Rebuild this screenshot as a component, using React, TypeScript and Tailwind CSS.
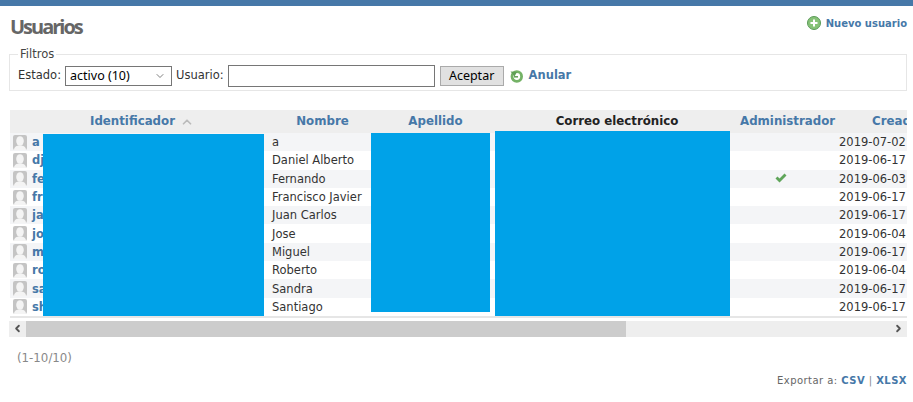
import { ChevronDown, ChevronLeft, ChevronRight, ChevronUp } from "lucide-react";

const users = [
  { id: "a", nombre: "a", creado: "2019-07-02" },
  { id: "dj", nombre: "Daniel Alberto", creado: "2019-06-17" },
  { id: "fe", nombre: "Fernando", creado: "2019-06-03", admin: true },
  { id: "fr", nombre: "Francisco Javier", creado: "2019-06-17" },
  { id: "ja", nombre: "Juan Carlos", creado: "2019-06-17" },
  { id: "jo", nombre: "Jose", creado: "2019-06-04" },
  { id: "m", nombre: "Miguel", creado: "2019-06-17" },
  { id: "ro", nombre: "Roberto", creado: "2019-06-04" },
  { id: "sa", nombre: "Sandra", creado: "2019-06-17" },
  { id: "sh", nombre: "Santiago", creado: "2019-06-17" },
];

function Avatar() {
  return (
    <svg width="14" height="15" viewBox="0 0 14 15" className="shrink-0">
      <rect width="14" height="15" rx="2" fill="#c4c4c4" />
      <ellipse cx="7" cy="6" rx="3.800" ry="4.800" fill="#f4f4f4" />
      <path d="M1 15c0-3.200 2.500-4.500 6-4.500s6 1.300 6 4.500z" fill="#f4f4f4" />
    </svg>
  );
}

function PlusIcon() {
  return (
    <svg width="14" height="14" viewBox="0 0 14 14">
      <circle cx="7" cy="7" r="6.500" fill="#86c277" stroke="#5a9a58" />
      <path d="M7 3.500v7M3.500 7h7" stroke="#fff" strokeWidth="2" />
    </svg>
  );
}

function UndoIcon() {
  return (
    <svg width="13" height="13" viewBox="0 0 13 13" fill="none">
      <circle cx="6.800" cy="6.500" r="4.800" stroke="#74b266" strokeWidth="2.800" />
      <path d="M0.500 1.500l6.500 .5-2.500 4.500z" fill="#5f9f55" />
      <path d="M4 6.800h4" stroke="#5f9f55" strokeWidth="1.500" />
    </svg>
  );
}

function CheckIcon() {
  return (
    <svg width="12" height="10" viewBox="0 0 12 10">
      <path d="M0.500 5.500L2.500 3.500 4.500 5.500 9.500 0.500 11.500 2.500 4.500 9.500z" fill="#5fa55a" />
    </svg>
  );
}

export default function App() {
  return (
    <div className="relative h-[402px] w-[913px] overflow-hidden bg-white font-['DejaVu_Sans',Verdana,sans-serif] text-[11.5px] text-[#333]">
      <div className="h-[6px] bg-[#4678a8]" />

      <div className="flex items-center justify-between pl-[10px] pr-[6px] pt-[8px]">
        <h1 className="font-['Open_Sans',sans-serif] text-[20px] font-bold leading-[26px] tracking-[-2px] text-[#666]">
          Usuarios
        </h1>
        <a className="mb-[8px] flex items-center gap-[5px] text-[10px] font-bold text-[#4678a8]">
          <PlusIcon />
          Nuevo usuario
        </a>
      </div>

      {/* Filtros */}
      <fieldset className="mx-[9px] mt-[9px] h-[42px] w-[898px] border border-[#e6e6e6] px-[8px]">
        <legend className="ml-0 px-[2px] text-[11.5px] leading-[11px] text-[#444]">Filtros</legend>
        <div className="mt-[5px] flex items-center">
          <span>Estado:</span>
          <span className="ml-[4px] flex h-[20px] w-[107px] items-center justify-between border border-[#767676] pl-[4px] pr-[5px] font-['Noto_Sans',sans-serif] text-[12.5px] text-black">
            activo (10)
            <ChevronDown size={12} strokeWidth={1.5} className="text-[#555]" />
          </span>
          <span className="ml-[4px]">Usuario:</span>
          <input className="ml-[4px] h-[22px] w-[207px] border border-[#767676] bg-white" />
          <button className="ml-[5px] h-[20px] w-[64px] border border-[#aaa] bg-[#e1e1e1] font-['Noto_Sans',sans-serif] text-[12.5px] text-black">
            Aceptar
          </button>
          <span className="ml-[6px] flex items-center gap-[6px] text-[11.5px] font-bold text-[#4678a8]">
            <UndoIcon />
            Anular
          </span>
        </div>
      </fieldset>

      {/* Tabla */}
      <div className="relative mx-[10px] mt-[14px] w-[897px] overflow-hidden pt-[5px]">
        <table className="w-[960px] table-fixed border-collapse">
          <colgroup>
            <col className="w-[254px]" />
            <col className="w-[107px]" />
            <col className="w-[119px]" />
            <col className="w-[240px]" />
            <col className="w-[105px]" />
            <col className="w-[135px]" />
          </colgroup>
          <thead>
            <tr className="h-[23px] bg-[#eeeeee] text-[11.8px] font-bold text-[#4678a8]">
              <th className="pl-[10px] font-bold">
                <span className="inline-flex items-center gap-[5px]">
                  Identificador
                  <ChevronUp size={14} strokeWidth={3} className="text-[#bbb]" />
                </span>
              </th>
              <th className="pl-[10px] font-bold">Nombre</th>
              <th className="pl-[10px] font-bold">Apellido</th>
              <th className="pl-[14px] font-bold text-[#222]">Correo electrónico</th>
              <th className="pl-[10px] font-bold">Administrador</th>
              <th className="pl-[37px] text-left font-bold">Creado</th>
            </tr>
          </thead>
          <tbody className="leading-[17px]">
            {users.map((u, i) => (
              <tr key={u.id} className={`h-[18.3px] ${i % 2 === 0 ? "bg-[#f4f5f7]" : "bg-white"}`}>
                <td className="p-0 pl-[3px]">
                  <span className="flex items-center gap-[5px] font-bold text-[#4678a8]">
                    <Avatar />
                    <span className="pt-[1px]">{u.id}</span>
                  </span>
                </td>
                <td className="p-0 pl-[8px] pt-[1px]">{u.nombre}</td>
                <td />
                <td />
                <td className="p-0 pr-[4px] pt-[1px] text-center align-middle">
                  {u.admin && <span className="inline-flex"><CheckIcon /></span>}
                </td>
                <td className="p-0 pl-[4px] pt-[1px]">{u.creado}</td>
              </tr>
            ))}
          </tbody>
        </table>
        <div className="h-[2px] bg-[#e6e6e6]" />

        {/* Cajas de ocultación */}
        <div className="absolute left-[33px] top-[29px] h-[182px] w-[221px] bg-[#00a2e8]" />
        <div className="absolute left-[361px] top-[28px] h-[179px] w-[119px] bg-[#00a2e8]" />
        <div className="absolute left-[485px] top-[26px] h-[185px] w-[235px] bg-[#00a2e8]" />
      </div>

      {/* Barra de desplazamiento */}
      <div className="mx-[9px] mt-[3px] flex h-[16px] w-[898px] items-center bg-[#eeeeee]">
        <span className="flex w-[17px] justify-center">
          <ChevronLeft size={11} strokeWidth={4} className="text-[#555]" />
        </span>
        <span className="h-full w-[600px] bg-[#cccccc]" />
        <span className="ml-auto flex w-[17px] justify-center">
          <ChevronRight size={11} strokeWidth={4} className="text-[#555]" />
        </span>
      </div>

      <div className="ml-[17px] mt-[13px] text-[11.8px] text-[#888]">(1-10/10)</div>

      <div className="mt-[5px] pr-[6px] text-right text-[10px] tracking-[0.45px] text-[#666]">
        Exportar a: <span className="font-bold text-[#4678a8]">CSV</span>{" "}
        <span className="text-[#888]">|</span>{" "}
        <span className="font-bold text-[#4678a8]">XLSX</span>
      </div>
    </div>
  );
}
